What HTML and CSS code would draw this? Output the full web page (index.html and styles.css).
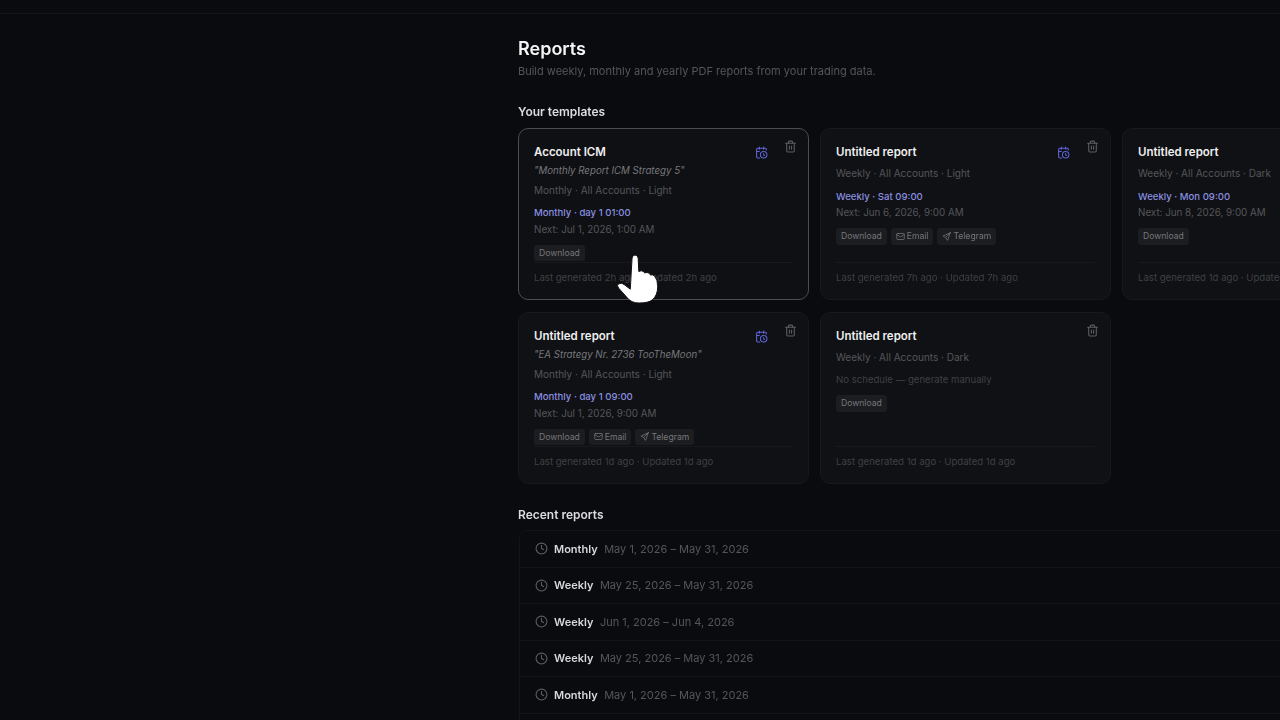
FILE: index.html
```html
<!DOCTYPE html>
<html>
<head>
  <meta charset="utf-8">
  <meta name="viewport" content="width=device-width, initial-scale=1.0">
  <title>Reports</title>
  <link rel="stylesheet" href="styles.css">
</head>
<body>
  <svg class="icon-defs" width="0" height="0">
    <symbol id="i-calendar" viewBox="0 0 24 24"><path d="M21 7.5V6a2 2 0 0 0-2-2H5a2 2 0 0 0-2 2v14a2 2 0 0 0 2 2h3.500"/><path d="M16 2v4"/><path d="M8 2v4"/><path d="M3 10h5"/><path d="M17.500 17.500 16 16.300V14"/><circle cx="16" cy="16" r="6"/></symbol>
    <symbol id="i-trash" viewBox="0 0 24 24"><path d="M3 6h18"/><path d="M19 6v14c0 1-1 2-2 2H7c-1 0-2-1-2-2V6"/><path d="M8 6V4c0-1 1-2 2-2h4c1 0 2 1 2 2v2"/><path d="M10 11v6"/><path d="M14 11v6"/></symbol>
    <symbol id="i-mail" viewBox="0 0 24 24"><rect x="2" y="4" width="20" height="16" rx="2"/><path d="m22 7-8.970 5.700a1.940 1.940 0 0 1-2.060 0L2 7"/></symbol>
    <symbol id="i-send" viewBox="0 0 24 24"><path d="m22 2-7 20a.55.55 0 0 1-1 0l-3.500-7L3 11.500a.55.55 0 0 1 0-1L22 2z"/><path d="M22 2 11 13"/></symbol>
    <symbol id="i-clock" viewBox="0 0 24 24"><circle cx="12" cy="12" r="10"/><path d="M12 6v6l4 2"/></symbol>
  </svg>

  <div class="topbar"></div>

  <main class="page">
    <h1>Reports</h1>
    <p class="subtitle">Build weekly, monthly and yearly PDF reports from your trading data.</p>

    <h2>Your templates</h2>
    <div class="templates">
      <div class="card active">
        <div class="card-actions">
          <svg class="icon cal"><use href="#i-calendar"/></svg>
          <svg class="icon trash"><use href="#i-trash"/></svg>
        </div>
        <div class="card-title">Account ICM</div>
        <div class="quote">"Monthly Report ICM Strategy 5"</div>
        <div class="meta">Monthly · All Accounts · Light</div>
        <div class="schedule">Monthly · day 1 01:00</div>
        <div class="next">Next: Jul 1, 2026, 1:00 AM</div>
        <div class="tags"><span class="tag">Download</span></div>
        <div class="card-foot">Last generated 2h ago · Updated 2h ago</div>
      </div>

      <div class="card">
        <div class="card-actions">
          <svg class="icon cal"><use href="#i-calendar"/></svg>
          <svg class="icon trash"><use href="#i-trash"/></svg>
        </div>
        <div class="card-title">Untitled report</div>
        <div class="meta">Weekly · All Accounts · Light</div>
        <div class="schedule">Weekly · Sat 09:00</div>
        <div class="next">Next: Jun 6, 2026, 9:00 AM</div>
        <div class="tags">
          <span class="tag">Download</span>
          <span class="tag"><svg class="tag-icon"><use href="#i-mail"/></svg>Email</span>
          <span class="tag"><svg class="tag-icon"><use href="#i-send"/></svg>Telegram</span>
        </div>
        <div class="card-foot">Last generated 7h ago · Updated 7h ago</div>
      </div>

      <div class="card">
        <div class="card-actions">
          <svg class="icon cal"><use href="#i-calendar"/></svg>
          <svg class="icon trash"><use href="#i-trash"/></svg>
        </div>
        <div class="card-title">Untitled report</div>
        <div class="meta">Weekly · All Accounts · Dark</div>
        <div class="schedule">Weekly · Mon 09:00</div>
        <div class="next">Next: Jun 8, 2026, 9:00 AM</div>
        <div class="tags"><span class="tag">Download</span></div>
        <div class="card-foot">Last generated 1d ago · Updated 1d ago</div>
      </div>

      <div class="card">
        <div class="card-actions">
          <svg class="icon cal"><use href="#i-calendar"/></svg>
          <svg class="icon trash"><use href="#i-trash"/></svg>
        </div>
        <div class="card-title">Untitled report</div>
        <div class="quote">"EA Strategy Nr. 2736 TooTheMoon"</div>
        <div class="meta">Monthly · All Accounts · Light</div>
        <div class="schedule">Monthly · day 1 09:00</div>
        <div class="next">Next: Jul 1, 2026, 9:00 AM</div>
        <div class="tags">
          <span class="tag">Download</span>
          <span class="tag"><svg class="tag-icon"><use href="#i-mail"/></svg>Email</span>
          <span class="tag"><svg class="tag-icon"><use href="#i-send"/></svg>Telegram</span>
        </div>
        <div class="card-foot">Last generated 1d ago · Updated 1d ago</div>
      </div>

      <div class="card">
        <div class="card-actions">
          <svg class="icon trash"><use href="#i-trash"/></svg>
        </div>
        <div class="card-title">Untitled report</div>
        <div class="meta">Weekly · All Accounts · Dark</div>
        <div class="no-schedule">No schedule — generate manually</div>
        <div class="tags"><span class="tag">Download</span></div>
        <div class="card-foot">Last generated 1d ago · Updated 1d ago</div>
      </div>
    </div>

    <h2 class="recent-heading">Recent reports</h2>
    <div class="recent">
      <div class="recent-row"><svg class="clock"><use href="#i-clock"/></svg><strong>Monthly</strong><span>May 1, 2026 – May 31, 2026</span></div>
      <div class="recent-row"><svg class="clock"><use href="#i-clock"/></svg><strong>Weekly</strong><span>May 25, 2026 – May 31, 2026</span></div>
      <div class="recent-row"><svg class="clock"><use href="#i-clock"/></svg><strong>Weekly</strong><span>Jun 1, 2026 – Jun 4, 2026</span></div>
      <div class="recent-row"><svg class="clock"><use href="#i-clock"/></svg><strong>Weekly</strong><span>May 25, 2026 – May 31, 2026</span></div>
      <div class="recent-row"><svg class="clock"><use href="#i-clock"/></svg><strong>Monthly</strong><span>May 1, 2026 – May 31, 2026</span></div>
      <div class="recent-row"></div>
    </div>
  </main>

  <svg class="cursor" viewBox="612 250 50 60">
    <path d="M632 258.500q0-3.500 3-3.500t3.200 3.500l.6 13q2.500-1.500 4.700 0 .8.600 1 1.500 2.500-1.300 4.800.3.800.6 1 1.700 2.500-.8 4.400 1.200 3 3.500 3 10.300 0 9-5.500 13.500-4 3-13.200 3-7.800 0-12-5.500l-8.500-9.500q-2.200-2.800.3-4.300 3-1.500 6 1.300l5.200 4z"/>
  </svg>
</body>
</html>
```

FILE: styles.css
```css
* {
  margin: 0;
  padding: 0;
  box-sizing: border-box;
}

html, body {
  height: 720px;
  overflow: hidden;
}

body {
  position: relative;
  background: #0a0b0f;
  color: #fff;
  font-family: Inter, "Liberation Sans", sans-serif;
}

.icon-defs {
  position: absolute;
}

svg {
  fill: none;
  stroke: currentColor;
  stroke-width: 2;
  stroke-linecap: round;
  stroke-linejoin: round;
}

.topbar {
  height: 14px;
  border-bottom: 1px solid #15161a;
}

/* the reference is a video frame, so everything is a little soft */
.page {
  width: 900px;
  margin-left: 518px;
  padding-top: 25px;
  filter: blur(0.35px);
}

h1 {
  font-size: 18px;
  line-height: 20px;
  font-weight: 600;
  color: #f5f5f6;
}

.subtitle {
  margin-top: 3px;
  font-size: 11px;
  line-height: 18px;
  color: #55565b;
}

h2 {
  margin-top: 24px;
  font-size: 12px;
  line-height: 16px;
  font-weight: 600;
  color: #dcdcde;
}

.templates {
  display: grid;
  grid-template-columns: repeat(3, 291px);
  grid-auto-rows: 172px;
  gap: 12px 11px;
  margin-top: 8px;
}

.card {
  position: relative;
  display: flex;
  flex-direction: column;
  padding: 15px 15px 14px;
  background: #101114;
  border: 1px solid #18191d;
  border-radius: 10px;
}

.card.active {
  border-color: #4c4d52;
  background: #0f1013;
}

.card-actions {
  position: absolute;
  top: 11px;
  right: 11px;
  display: flex;
  align-items: flex-start;
  gap: 16px;
}

.icon {
  width: 13px;
  height: 13px;
}

.icon.cal {
  margin-top: 6px;
  color: #5f63d8;
}

.icon.trash {
  color: #5c5d62;
}

.card-title {
  font-size: 11.500px;
  line-height: 16px;
  font-weight: 600;
  color: #eeeeef;
}

.quote {
  margin-top: 3px;
  font-size: 9.700px;
  line-height: 16px;
  font-style: italic;
  color: #77787d;
}

.meta {
  margin-top: 6px;
  font-size: 10px;
  line-height: 15px;
  color: #55565b;
}

.quote + .meta {
  margin-top: 3.500px;
}

.schedule {
  margin-top: 7.500px;
  font-size: 9.600px;
  line-height: 15px;
  font-weight: 500;
  color: #8a8fe0;
}

.next {
  margin-top: 1.500px;
  font-size: 9.800px;
  line-height: 15px;
  color: #55565b;
}

.no-schedule {
  margin-top: 7px;
  font-size: 9.600px;
  line-height: 15px;
  color: #3f4045;
}

.tags {
  display: flex;
  gap: 4px;
  margin-top: 8px;
}

.tag {
  display: inline-flex;
  align-items: center;
  gap: 2px;
  height: 16.500px;
  padding: 0 5px;
  border-radius: 3px;
  background: #1c1d20;
  font-size: 8.600px;
  color: #76777b;
}

.tag-icon {
  width: 9px;
  height: 9px;
}

.card-foot {
  margin-top: auto;
  padding-top: 7px;
  border-top: 1px solid #18191d;
  font-size: 9.600px;
  line-height: 15px;
  white-space: nowrap;
  color: #3f4045;
}

.recent-heading {
  margin-top: 22.500px;
}

.recent {
  margin-top: 7.500px;
  margin-left: 1px;
  border: 1px solid #131418;
  border-radius: 8px;
}

.recent-row {
  display: flex;
  align-items: center;
  gap: 6.500px;
  height: 36.500px;
  padding-left: 14.500px;
  border-bottom: 1px solid #131418;
  font-size: 11px;
}

.clock {
  width: 13px;
  height: 13px;
  color: #5c5d62;
}

.recent-row strong {
  font-weight: 600;
  color: #d8d8da;
}

.recent-row span {
  color: #55565b;
}

.cursor {
  position: absolute;
  left: 612px;
  top: 250px;
  width: 50px;
  height: 60px;
  fill: #fff;
  stroke: #111;
  stroke-width: 1;
}
```
